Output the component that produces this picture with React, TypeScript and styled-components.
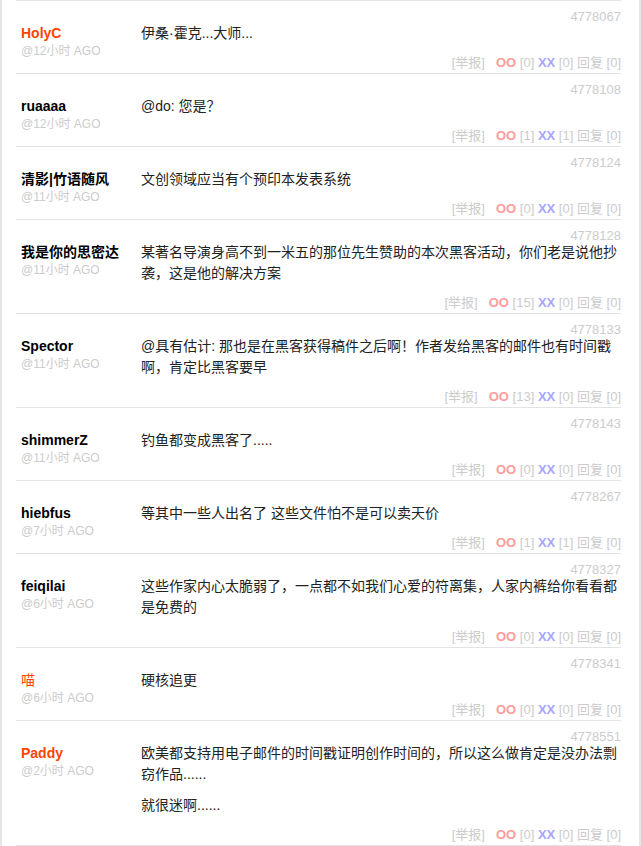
import React from "react";
import styled, { createGlobalStyle } from "styled-components";

interface IComment {
  id: number;
  author: string;
  hot?: boolean;
  ago: string;
  paragraphs: string[];
  oo: number;
  xx: number;
  replies: number;
}

const comments: IComment[] = [
  { id: 4778067, author: "HolyC", hot: true, ago: "@12小时 AGO", paragraphs: ["伊桑·霍克...大师..."], oo: 0, xx: 0, replies: 0 },
  { id: 4778108, author: "ruaaaa", ago: "@12小时 AGO", paragraphs: ["@do: 您是？"], oo: 1, xx: 1, replies: 0 },
  { id: 4778124, author: "清影|竹语随风", ago: "@11小时 AGO", paragraphs: ["文创领域应当有个预印本发表系统"], oo: 0, xx: 0, replies: 0 },
  {
    id: 4778128,
    author: "我是你的思密达",
    ago: "@11小时 AGO",
    paragraphs: ["某著名导演身高不到一米五的那位先生赞助的本次黑客活动，你们老是说他抄袭，这是他的解决方案"],
    oo: 15,
    xx: 0,
    replies: 0,
  },
  {
    id: 4778133,
    author: "Spector",
    ago: "@11小时 AGO",
    paragraphs: ["@具有估计: 那也是在黑客获得稿件之后啊！作者发给黑客的邮件也有时间戳啊，肯定比黑客要早"],
    oo: 13,
    xx: 0,
    replies: 0,
  },
  { id: 4778143, author: "shimmerZ", ago: "@11小时 AGO", paragraphs: ["钓鱼都变成黑客了....."], oo: 0, xx: 0, replies: 0 },
  { id: 4778267, author: "hiebfus", ago: "@7小时 AGO", paragraphs: ["等其中一些人出名了 这些文件怕不是可以卖天价"], oo: 1, xx: 1, replies: 0 },
  {
    id: 4778327,
    author: "feiqilai",
    ago: "@6小时 AGO",
    paragraphs: ["这些作家内心太脆弱了，一点都不如我们心爱的符离集，人家内裤给你看看都是免费的"],
    oo: 0,
    xx: 0,
    replies: 0,
  },
  { id: 4778341, author: "喵", hot: true, ago: "@6小时 AGO", paragraphs: ["硬核追更"], oo: 0, xx: 0, replies: 0 },
  {
    id: 4778551,
    author: "Paddy",
    hot: true,
    ago: "@2小时 AGO",
    paragraphs: ["欧美都支持用电子邮件的时间戳证明创作时间的，所以这么做肯定是没办法剽窃作品......", "就很迷啊......"],
    oo: 0,
    xx: 0,
    replies: 0,
  },
];

const isCjk = (s: string) => /[\u4e00-\u9fff]/.test(s);

export default function App() {
  return (
    <>
      <GlobalStyle />
      <Page>
        <CommentList>
          {comments.map((c) => (
            <CommentRow key={c.id}>
              <RowId>{c.id}</RowId>
              <Author>
                <AuthorName $hot={!!c.hot} $light={!!c.hot && isCjk(c.author)}>
                  {c.author}
                </AuthorName>
                <Ago>{c.ago}</Ago>
              </Author>
              <Content>
                {c.paragraphs.map((p, i) => (
                  <p key={i}>{p}</p>
                ))}
              </Content>
              <VoteBar>
                <Report>[举报]</Report>
                <Like>OO</Like> [{c.oo}] <Unlike>XX</Unlike> [{c.xx}] 回复 [{c.replies}]
              </VoteBar>
            </CommentRow>
          ))}
        </CommentList>
      </Page>
    </>
  );
}

const GlobalStyle = createGlobalStyle`
  html, body {
    margin: 0;
    padding: 0;
    background: #fff;
  }
  body {
    font-family: "Liberation Sans", "Noto Sans CJK SC", sans-serif;
  }
`;

const Page = styled.div`
  width: 641px;
  min-height: 846px;
  box-sizing: border-box;
  border-left: 2px solid #e6e6e6;
  border-right: 2px solid #e6e6e6;
  padding: 0 18px 0 14px;
`;

const CommentList = styled.ol`
  list-style: none;
  margin: 0;
  padding: 0;
  border-top: 1px solid #e3e3e3;
`;

const CommentRow = styled.li`
  display: grid;
  grid-template-columns: 125px 1fr;
  grid-template-rows: auto auto auto;
  padding: 10px 0 2px;
  border-bottom: 1px solid #e3e3e3;
`;

const RowId = styled.div`
  grid-column: 2;
  grid-row: 1;
  text-align: right;
  font-size: 13px;
  line-height: 12px;
  color: #ccc;
`;

const Author = styled.div`
  grid-column: 1;
  grid-row: 2 / span 2;
  padding-left: 5px;
`;

const AuthorName = styled.strong<{ $hot: boolean; $light: boolean }>`
  display: block;
  font-size: 14px;
  line-height: 20px;
  font-weight: ${(p) => (p.$light ? "normal" : "bold")};
  color: ${(p) => (p.$hot ? "#ff4400" : "#000")};
`;

const Ago = styled.div`
  font-size: 12px;
  line-height: 16px;
  color: #ccc;
`;

const Content = styled.div`
  grid-column: 2;
  grid-row: 2;
  font-size: 14px;
  line-height: 21px;
  color: #222;

  p {
    margin: 0 0 10px;
  }
  p:last-child {
    margin-bottom: 0;
  }
`;

const VoteBar = styled.div`
  grid-column: 2;
  grid-row: 3;
  margin-top: 11px;
  text-align: right;
  font-size: 13px;
  line-height: 16px;
  color: #ccc;
`;

const Report = styled.span`
  margin-right: 11px;
`;

const Like = styled.span`
  font-weight: bold;
  color: #ff9c9c;
`;

const Unlike = styled.span`
  font-weight: bold;
  color: #a6a6ff;
`;
